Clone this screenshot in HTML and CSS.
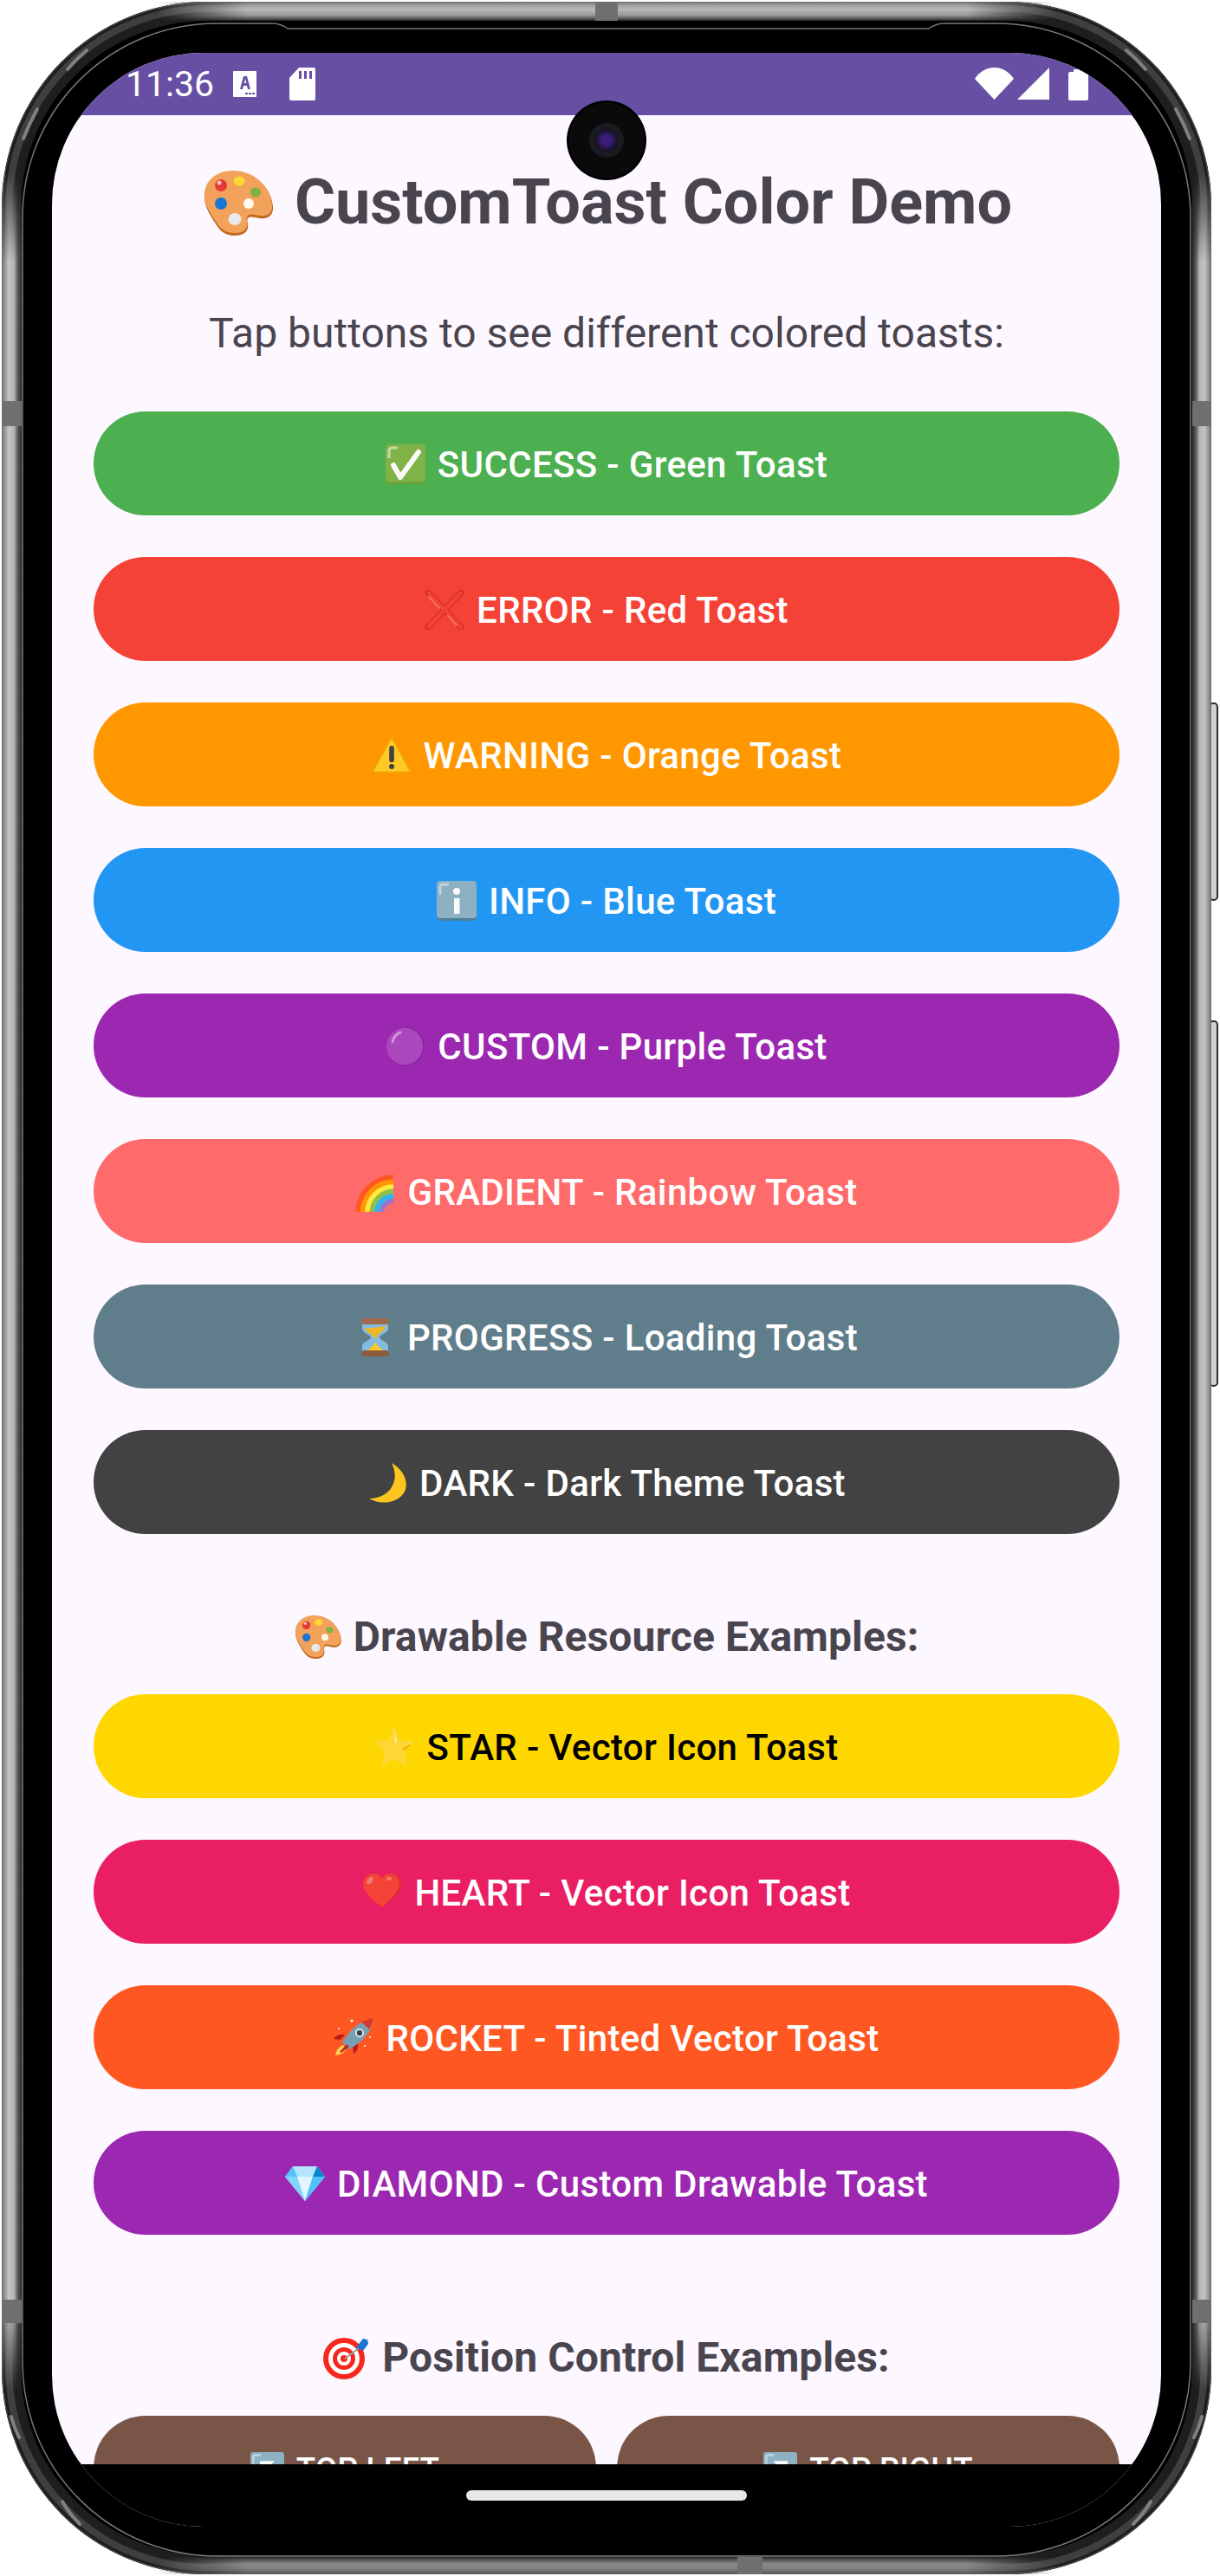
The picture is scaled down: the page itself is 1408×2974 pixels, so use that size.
FILE: index.html
```html
<!DOCTYPE html>
<html lang="en">
<head>
<meta charset="utf-8">
<title>CustomToast Color Demo</title>
<link rel="stylesheet" href="styles.css">
</head>
<body>
<svg class="defs" width="0" height="0" aria-hidden="true">
  <defs>
    <symbol id="e-palette" viewBox="0 0 80 75">
      <path d="M34 1C14 1 0 14 1 32c1 12 8 22 14 31 5 8 11 12 21 12 8 0 14-3 15-9 1-5-2-8 0-11 3-3 8-1 14 0 8 1 14-2 15-10C81 24 62 1 34 1Z" fill="#BF6A1F"/>
      <path d="M34 0C14 0 0 12 1 30c1 12 8 21 14 30 5 8 11 12 21 12 8 0 13-3 14-8 1-5-2-8 1-12 3-3 8-1 14 0 8 1 13-2 14-9C80 24 62 0 34 0Z" fill="#F2A25A"/>
      <circle cx="20" cy="17" r="7" fill="#E53935"/><circle cx="18" cy="14" r="2.500" fill="#fff" opacity=".7"/>
      <ellipse cx="41" cy="12" rx="6.500" ry="5.500" fill="#FDD835"/>
      <ellipse cx="60" cy="25" rx="6" ry="5.500" fill="#7CB342"/>
      <ellipse cx="20" cy="38" rx="7" ry="7" fill="#1976D2"/>
      <ellipse cx="52" cy="38" rx="6" ry="6" fill="#FFF8EE"/>
      <ellipse cx="36" cy="56" rx="7.500" ry="7" fill="#E8E8E8"/>
    </symbol>
    <symbol id="e-check" viewBox="0 0 46 46">
      <rect x="0" y="0" width="46" height="46" rx="4" fill="#6FA33A"/>
      <rect x="0" y="0" width="46" height="43" rx="4" fill="#7FB347"/>
      <path d="M4 16V7a3 3 0 0 1 3-3h7" stroke="#C3DAA6" stroke-width="3" fill="none"/>
      <path d="M9 24l8 14L38 9" stroke="#FAFAFA" stroke-width="6" stroke-linecap="round" stroke-linejoin="round" fill="none"/>
    </symbol>
    <symbol id="e-cross" viewBox="0 0 46 46">
      <path d="M4 3l38 40" stroke="#D32F2F" stroke-width="7" stroke-linecap="round"/>
      <path d="M42 3L4 43" stroke="#D32F2F" stroke-width="7" stroke-linecap="round"/>
      <path d="M5 4l37 39M41 4L5 42" stroke="#F44336" stroke-width="4.600" stroke-linecap="round"/>
      <path d="M5 8l12 13M27 30l10 11" stroke="#F77066" stroke-width="2" stroke-linecap="round"/>
    </symbol>
    <symbol id="e-warning" viewBox="0 0 46 46">
      <path d="M23 2L45 42H1Z" fill="#F2A600" stroke="#F2A600" stroke-width="2" stroke-linejoin="round"/>
      <path d="M23 5L43 41H3Z" fill="#FFCA28" stroke="#FFCA28" stroke-width="1" stroke-linejoin="round"/>
      <rect x="20.200" y="12" width="5.600" height="19" rx="2.800" fill="#424242"/>
      <circle cx="23" cy="36" r="3" fill="#424242"/>
    </symbol>
    <symbol id="e-info" viewBox="0 0 46 46">
      <rect width="46" height="46" rx="4" fill="#4F7F96"/>
      <rect width="46" height="43" rx="4" fill="#8DB0C2"/>
      <path d="M4 16V7a3 3 0 0 1 3-3h7" stroke="#BED3DE" stroke-width="3" fill="none"/>
      <circle cx="23" cy="12" r="4" fill="#FAFAFA"/>
      <rect x="20" y="20" width="6.500" height="18" fill="#FAFAFA"/>
    </symbol>
    <symbol id="e-circle" viewBox="0 0 46 46">
      <ellipse cx="23" cy="23" rx="22" ry="23" fill="#8E24AA"/>
      <ellipse cx="22" cy="23" rx="21" ry="21.500" fill="#AB47BC"/>
      <path d="M8 18c1-5 4-9 9-11" stroke="#CE93D8" stroke-width="3" fill="none" stroke-linecap="round"/>
    </symbol>
    <symbol id="e-rainbow" viewBox="0 0 46 46">
      <g fill="none" stroke-width="5.500">
        <path d="M3 47A41 41 0 0 1 44 6" stroke="#FF5722"/>
        <path d="M8.500 47A35.500 35.500 0 0 1 44 11.500" stroke="#FF9800"/>
        <path d="M14 47A30 30 0 0 1 44 17" stroke="#FFEB3B"/>
        <path d="M19.500 47A24.500 24.500 0 0 1 44 22.500" stroke="#8BC34A"/>
        <path d="M25 47A19 19 0 0 1 44 28" stroke="#29B6F6"/>
        <path d="M30.500 47A13.500 13.500 0 0 1 44 33.500" stroke="#9575CD"/>
      </g>
    </symbol>
    <symbol id="e-hourglass" viewBox="0 0 46 46">
      <path d="M8 5h30v8c0 5-10 7-10 10s10 5 10 10v8H8v-8c0-5 10-7 10-10S8 18 8 13Z" fill="#81BCE0"/>
      <path d="M11 12c8 1 14-1 24-2-1 6-9 8-11 14h-2c-2-5-10-7-11-12Z" fill="#F2B824"/>
      <path d="M12 40c3-4 9-6 11-12 2 6 8 8 11 12Z" fill="#FFCA28"/>
      <rect x="7" y="1" width="32" height="7" rx="3.500" fill="#A1694A"/>
      <rect x="7" y="38" width="32" height="7" rx="3.500" fill="#8D5A3E"/>
    </symbol>
    <symbol id="e-moon" viewBox="0 0 46 46">
      <path d="M28 0C42 8 48 22 43 33 37 45 17 50 2 41 16 41 26 34 30 24 33 16 32 8 28 0Z" fill="#FFC51F"/>
    </symbol>
    <symbol id="e-star" viewBox="0 0 46 46">
      <path d="M23 1l6 15 16 1-12 11 4 16-14-8-14 8 4-16L1 17l16-1Z" fill="#FDD835" stroke="#FDD835" stroke-width="2" stroke-linejoin="round"/>
      <path d="M23 5l3 12-2 1Z" fill="#FFF59D"/>
      <path d="M32 25l9-5 1 1-8 6Z" fill="#F4A800"/>
    </symbol>
    <symbol id="e-heart" viewBox="0 0 46 46">
      <path d="M23 40C12 31 1 23 1 13 1 6 7 1 13 1c5 0 8 3 10 6 2-3 5-6 10-6 6 0 12 5 12 12 0 10-11 18-22 27Z" fill="#D32F2F"/>
      <path d="M23 40C12 31 1 23 1 13 1 6 7 1 13 1c5 0 8 3 10 6 2-3 4-6 9-6 6 0 11 5 11 11 0 10-10 19-20 28Z" fill="#F44336"/>
      <ellipse cx="9" cy="9" rx="3" ry="5" transform="rotate(35 9 9)" fill="#EF7A73"/>
      <ellipse cx="31" cy="7" rx="3" ry="2" fill="#EF7A73"/>
    </symbol>
    <symbol id="e-rocket" viewBox="0 0 46 46">
      <path d="M2 43c1-6 4-10 9-12l4 4c-2 5-7 7-13 8Z" fill="#FFD54F"/>
      <path d="M8 25l-8-1c3-5 8-6 13-5ZM22 33l1 8c5-3 6-8 5-13Z" fill="#B71C1C"/>
      <path d="M10 28C18 14 30 3 46 0c-2 17-13 27-28 36Z" fill="#78A0B4"/>
      <path d="M32 4c4-2 9-3 14-4-1 5-3 10-5 13Z" fill="#D8392B"/>
      <circle cx="30" cy="17" r="5" fill="#E8EEF0"/><circle cx="30" cy="17" r="3.200" fill="#37474F"/>
      <path d="M7 39l8-9 3 3-9 7Z" fill="#C62828"/>
      <circle cx="21" cy="3" r="1.500" fill="#fff"/><circle cx="6" cy="12" r="1" fill="#fff"/><circle cx="42" cy="22" r="1" fill="#fff"/><circle cx="36" cy="32" r="1" fill="#fff"/>
    </symbol>
    <symbol id="e-diamond" viewBox="0 0 46 46">
      <path d="M9 3h28l9 12-23 28L0 15Z" fill="#B3E5FC"/>
      <path d="M0 15h46L23 43Z" fill="#81D4FA"/>
      <path d="M14 15h18l-9 28Z" fill="#E1F5FE"/>
      <path d="M37 3l9 12H32Z" fill="#0288D1"/>
      <path d="M9 3l5 12H0ZM32 15h14L23 43Z" fill="#4FC3F7"/>
    </symbol>
    <symbol id="e-target" viewBox="0 0 54 50">
      <circle cx="24" cy="26" r="24" fill="#F5281E"/>
      <circle cx="24" cy="26" r="18" fill="#fff"/>
      <circle cx="24" cy="26" r="13" fill="#F5281E"/>
      <circle cx="24" cy="26" r="8" fill="#fff"/>
      <circle cx="24" cy="26" r="4" fill="#F5281E"/>
      <path d="M25 26L44 12" stroke="#9E9E9E" stroke-width="2"/>
      <path d="M38 13l8-10 5 1 1 5-6 8Z" fill="#1976D2"/>
    </symbol>
    <symbol id="e-key-left" viewBox="0 0 46 46">
      <rect width="46" height="46" rx="4" fill="#8DB0C2"/>
      <path d="M4 16V7a3 3 0 0 1 3-3h7" stroke="#BED3DE" stroke-width="3" fill="none"/>
      <path d="M13 12h20L24 21l9 9-4 4-9-9-7 7Z" fill="#FAFAFA"/>
    </symbol>
    <symbol id="e-key-right" viewBox="0 0 46 46">
      <rect width="46" height="46" rx="4" fill="#8DB0C2"/>
      <path d="M4 16V7a3 3 0 0 1 3-3h7" stroke="#BED3DE" stroke-width="3" fill="none"/>
      <path d="M33 12H13l9 9-9 9 4 4 9-9 7 7Z" fill="#FAFAFA"/>
    </symbol>
    <linearGradient id="metal-v" x1="0" x2="1" y1="0" y2="0">
      <stop offset="0" stop-color="#6a6a6a"/><stop offset=".12" stop-color="#8f8f8f"/><stop offset=".35" stop-color="#c4c4c4"/><stop offset=".62" stop-color="#b5b5b5"/><stop offset=".8" stop-color="#5c5c5c"/><stop offset="1" stop-color="#2e2e2e"/>
    </linearGradient>
    <linearGradient id="metal-v-r" x1="1" x2="0" y1="0" y2="0">
      <stop offset="0" stop-color="#6a6a6a"/><stop offset=".12" stop-color="#8f8f8f"/><stop offset=".35" stop-color="#c4c4c4"/><stop offset=".62" stop-color="#b5b5b5"/><stop offset=".8" stop-color="#5c5c5c"/><stop offset="1" stop-color="#2e2e2e"/>
    </linearGradient>
    <linearGradient id="metal-t" x1="0" x2="0" y1="0" y2="1">
      <stop offset="0" stop-color="#6a6a6a"/><stop offset=".15" stop-color="#999"/><stop offset=".4" stop-color="#b8b8b8"/><stop offset=".7" stop-color="#9a9a9a"/><stop offset=".9" stop-color="#555"/><stop offset="1" stop-color="#222"/>
    </linearGradient>
    <linearGradient id="metal-b" x1="0" x2="0" y1="1" y2="0">
      <stop offset="0" stop-color="#555"/><stop offset=".3" stop-color="#7d7d7d"/><stop offset=".6" stop-color="#8a8a8a"/><stop offset=".9" stop-color="#444"/><stop offset="1" stop-color="#222"/>
    </linearGradient>
    <linearGradient id="fade-v" x1="0" x2="0" y1="0" y2="1">
      <stop offset="0" stop-color="#000"/><stop offset=".04" stop-color="#fff"/><stop offset=".96" stop-color="#fff"/><stop offset="1" stop-color="#000"/>
    </linearGradient>
    <linearGradient id="fade-h" x1="0" x2="1" y1="0" y2="0">
      <stop offset="0" stop-color="#000"/><stop offset=".1" stop-color="#fff"/><stop offset=".9" stop-color="#fff"/><stop offset="1" stop-color="#000"/>
    </linearGradient>
    <mask id="mask-v" maskUnits="userSpaceOnUse" x="0" y="0" width="1408" height="2974"><rect y="200" width="1408" height="2560" fill="url(#fade-v)"/></mask>
    <mask id="mask-h" maskUnits="userSpaceOnUse" x="0" y="0" width="1408" height="2974"><rect x="180" width="1040" height="2974" fill="url(#fade-h)"/></mask>
  </defs>
</svg>

<main class="phone">
  <svg class="frame" width="1408" height="2974" viewBox="0 0 1408 2974" aria-hidden="true">
    <g class="side-keys">
      <rect x="1396" y="812" width="9" height="227" rx="4"/>
      <rect x="1396" y="1179" width="9" height="421" rx="4"/>
    </g>
    <rect x="2" y="2" width="1396" height="2970" rx="236" fill="#000"/>
    <rect x="13.500" y="13" width="1373" height="2948" rx="225" fill="none" stroke="#1e1e1e" stroke-width="22"/>
    <rect x="10.500" y="10" width="1379" height="2954" rx="228" fill="none" stroke="#3f3f3f" stroke-width="8"/>
    <rect x="2.500" y="2.500" width="1395" height="2969" rx="236" fill="none" stroke="#555" stroke-width="1"/>
    <g mask="url(#mask-v)">
      <rect x="2" y="200" width="23" height="2560" fill="url(#metal-v)"/>
      <rect x="1376" y="200" width="22" height="2560" fill="url(#metal-v-r)"/>
    </g>
    <g mask="url(#mask-h)">
      <rect x="180" y="2" width="1040" height="22" fill="url(#metal-t)"/>
      <rect x="180" y="2952" width="1040" height="20" fill="url(#metal-b)"/>
    </g>
    <g class="bands">
      <rect x="2" y="463" width="23" height="29"/>
      <rect x="1376" y="463" width="22" height="29"/>
      <rect x="2" y="2655" width="23" height="27"/>
      <rect x="1376" y="2655" width="22" height="27"/>
      <rect x="687" y="2" width="26" height="22"/>
      <rect x="851" y="2952" width="29" height="20"/>
    </g>
    <g class="gloss">
      <path d="M78 80Q88 68 100 58"/>
      <path d="M43 126Q34 142 27 160"/>
      <path d="M1300 58Q1312 68 1322 80"/>
      <path d="M1357 126Q1366 142 1373 160"/>
      <path d="M72 2888Q80 2902 92 2914"/>
      <path d="M1328 2888Q1320 2902 1308 2914"/>
      <path d="M13 2790Q16 2802 22 2814"/>
      <path d="M1387 2790Q1384 2802 1378 2814"/>
    </g>
    <path class="rim" d="M332 33H1072Q1080 27 1090 27H1150A224 224 0 0 1 1374 251V2727A224 224 0 0 1 1150 2951H250A224 224 0 0 1 26 2727V251A224 224 0 0 1 250 27H314Q324 27 332 33Z"/>
  </svg>

  <section class="screen">
    <header class="status">
      <div class="status-left">
        <span class="time">11:36</span>
        <svg class="ic-a" viewBox="0 0 27 30" aria-hidden="true"><path d="M1 0h25a1 1 0 0 1 1 1v28a1 1 0 0 1-1 1H1a1 1 0 0 1-1-1V1a1 1 0 0 1 1-1Z" fill="#fff"/><path d="M8 21L12 6h4l4 15h-3l-1-4h-4l-1 4Zm4.800-7h2.600L14 9Z" fill="#6750A4"/><path d="M14 25h3v2h-3Zm4 0h3v2h-3Zm4 0h3v2h-3Z" fill="#6750A4"/></svg>
        <svg class="ic-sd" viewBox="0 0 30 38" aria-hidden="true"><path d="M11 0h17a2 2 0 0 1 2 2v34a2 2 0 0 1-2 2H2a2 2 0 0 1-2-2V12Z" fill="#fff"/><path d="M11 4h3v9h-3Zm6 0h3v9h-3Zm6 0h3v9h-3Z" fill="#6750A4"/></svg>
      </div>
      <div class="status-right">
        <svg class="ic-wifi" viewBox="0 0 45 37" aria-hidden="true"><path d="M22.500 37L0 13C6 4 14 0 22.500 0S39 4 45 13Z" fill="#fff"/></svg>
        <svg class="ic-signal" viewBox="0 0 37 37" aria-hidden="true"><path d="M0 37L37 0v37Z" fill="#fff"/></svg>
        <svg class="ic-batt" viewBox="0 0 23 36" aria-hidden="true"><path d="M6 0h11v3h4a2 2 0 0 1 2 2v29a2 2 0 0 1-2 2H2a2 2 0 0 1-2-2V5a2 2 0 0 1 2-2h4Z" fill="#fff"/></svg>
      </div>
    </header>

    <div class="content">
      <h1 class="title"><svg class="emoji-title"><use href="#e-palette"/></svg><span>CustomToast Color Demo</span></h1>
      <p class="subtitle">Tap buttons to see different colored toasts:</p>

      <div class="stack">
        <button class="btn c-green"><svg class="emoji"><use href="#e-check"/></svg><span>SUCCESS - Green Toast</span></button>
        <button class="btn c-red"><svg class="emoji"><use href="#e-cross"/></svg><span>ERROR - Red Toast</span></button>
        <button class="btn c-orange"><svg class="emoji"><use href="#e-warning"/></svg><span>WARNING - Orange Toast</span></button>
        <button class="btn c-blue"><svg class="emoji"><use href="#e-info"/></svg><span>INFO - Blue Toast</span></button>
        <button class="btn c-purple"><svg class="emoji"><use href="#e-circle"/></svg><span>CUSTOM - Purple Toast</span></button>
        <button class="btn c-coral"><svg class="emoji"><use href="#e-rainbow"/></svg><span>GRADIENT - Rainbow Toast</span></button>
        <button class="btn c-slate"><svg class="emoji"><use href="#e-hourglass"/></svg><span>PROGRESS - Loading Toast</span></button>
        <button class="btn c-dark"><svg class="emoji"><use href="#e-moon"/></svg><span>DARK - Dark Theme Toast</span></button>
      </div>

      <h2 class="section section-a"><svg class="emoji-head"><use href="#e-palette"/></svg><span>Drawable Resource Examples:</span></h2>

      <div class="stack">
        <button class="btn c-gold"><svg class="emoji"><use href="#e-star"/></svg><span>STAR - Vector Icon Toast</span></button>
        <button class="btn c-pink"><svg class="emoji"><use href="#e-heart"/></svg><span>HEART - Vector Icon Toast</span></button>
        <button class="btn c-deep"><svg class="emoji"><use href="#e-rocket"/></svg><span>ROCKET - Tinted Vector Toast</span></button>
        <button class="btn c-purple"><svg class="emoji"><use href="#e-diamond"/></svg><span>DIAMOND - Custom Drawable Toast</span></button>
      </div>

      <h2 class="section section-b"><svg class="emoji-head"><use href="#e-target"/></svg><span>Position Control Examples:</span></h2>

      <div class="pair">
        <button class="btn btn-small c-brown"><svg class="emoji"><use href="#e-key-left"/></svg><span>TOP LEFT</span></button>
        <button class="btn btn-small c-brown"><svg class="emoji"><use href="#e-key-right"/></svg><span>TOP RIGHT</span></button>
      </div>
    </div>

    <footer class="nav"><span class="pill"></span></footer>
  </section>

  <div class="camera"><span class="lens"></span></div>
</main>
</body>
</html>
```

FILE: styles.css
```css
html, body {
  margin: 0;
  padding: 0;
  background: #fff;
}

body {
  width: 1408px;
  height: 2974px;
  overflow: hidden;
  font-family: Roboto, "Liberation Sans", sans-serif;
}

.defs {
  position: absolute;
}

.phone {
  position: relative;
  box-sizing: border-box;
  width: 1408px;
  height: 2974px;
  padding: 61px 68px 57px 60px;
}

.frame {
  position: absolute;
  left: 0;
  top: 0;
}

.side-keys rect {
  fill: #d0d0d0;
  stroke: #2e2e2e;
  stroke-width: 2;
}

.bands rect {
  fill: #6e706e;
}

.gloss path {
  fill: none;
  stroke: #808080;
  stroke-width: 4;
  stroke-linecap: round;
}

.rim {
  fill: none;
  stroke: #777;
  stroke-width: 1.5;
}

.screen {
  position: relative;
  display: flex;
  flex-direction: column;
  height: 2856px;
  width: 1280px;
  border-radius: 175px;
  overflow: hidden;
  background: #fdf7ff;
}

.status {
  flex: none;
  height: 72px;
  display: flex;
  justify-content: space-between;
  background: #6750a4;
}

.status-left {
  display: flex;
  align-items: flex-start;
  padding: 0 0 0 85px;
}

.time {
  color: #fff;
  font-size: 41px;
  line-height: 48px;
  margin-top: 12px;
  width: 124px;
}

.ic-a {
  width: 27px;
  height: 30px;
  margin-top: 21px;
}

.ic-sd {
  width: 30px;
  height: 38px;
  margin: 17px 0 0 38px;
}

.status-right {
  display: flex;
  align-items: flex-start;
  padding: 17px 84px 0 0;
}

.ic-wifi {
  width: 45px;
  height: 37px;
}

.ic-signal {
  width: 37px;
  height: 37px;
  margin-left: 4px;
}

.ic-batt {
  width: 23px;
  height: 36px;
  margin: 2px 0 0 22px;
}

.content {
  flex: 1;
  min-height: 0;
  overflow: hidden;
  padding: 60px 48px 0;
}

.title {
  display: flex;
  justify-content: center;
  align-items: center;
  gap: 25px;
  margin: 0;
  padding-left: 3px;
  height: 82px;
  color: #49454f;
  font-size: 72px;
  line-height: 82px;
  font-weight: 700;
}

.emoji-title {
  width: 80px;
  height: 75px;
  flex: none;
}

.subtitle {
  margin: 84px 0 64px;
  height: 52px;
  text-align: center;
  color: #49454f;
  font-size: 48px;
  line-height: 52px;
}

.stack {
  display: flex;
  flex-direction: column;
  gap: 48px;
}

.btn {
  display: flex;
  justify-content: center;
  align-items: center;
  gap: 14px;
  width: 100%;
  height: 120px;
  padding: 4px 0 0;
  border: 0;
  border-radius: 60px;
  color: #fff;
  font-family: inherit;
  font-size: 42px;
  font-weight: 500;
  letter-spacing: 0.34px;
  line-height: 48px;
}

.btn .emoji {
  margin-top: -2px;
}

.btn-small {
  font-size: 36.75px;
  letter-spacing: 0.26px;
}

.btn-small .emoji {
  width: 39px;
  height: 39px;
}

.emoji {
  width: 46px;
  height: 46px;
  flex: none;
}

.c-green { background: #4caf50; }
.c-red { background: #f44336; }
.c-orange { background: #ff9800; }
.c-blue { background: #2196f3; }
.c-purple { background: #9c27b0; }
.c-coral { background: #ff6b6b; }
.c-slate { background: #607d8b; }
.c-dark { background: #424242; }
.c-gold { background: #ffd700; color: #000; }
.c-pink { background: #e91e63; }
.c-deep { background: #ff5722; }
.c-brown { background: #795548; }

.section {
  display: flex;
  justify-content: center;
  align-items: center;
  gap: 14px;
  height: 52px;
  color: #49454f;
  font-size: 48px;
  letter-spacing: 0.1px;
  line-height: 52px;
  font-weight: 700;
}

.section-a {
  margin: 93px 0 40px;
}

.section-b {
  margin: 116px 0 41px;
}

.emoji-head {
  width: 54px;
  height: 50px;
  flex: none;
}

.pair {
  display: grid;
  grid-template-columns: 1fr 1fr;
  gap: 24px;
}

.nav {
  flex: none;
  height: 72px;
  background: #000;
  display: flex;
  justify-content: center;
  padding-top: 30px;
  box-sizing: border-box;
}

.pill {
  width: 324px;
  height: 12px;
  border-radius: 6px;
  background: #e8e8e8;
}

.camera {
  position: absolute;
  left: 654px;
  top: 116px;
  width: 92px;
  height: 92px;
  border-radius: 50%;
  background: radial-gradient(circle at 50% 50%, #1a1a22 0 30%, #0a0a0a 31% 66%, #000 67%);
  display: flex;
  align-items: center;
  justify-content: center;
}

.lens {
  width: 30px;
  height: 30px;
  border-radius: 50%;
  background: radial-gradient(circle at 50% 50%, #3a1c7a 0 25%, #15131f 60%, #33353a 100%);
}
```
